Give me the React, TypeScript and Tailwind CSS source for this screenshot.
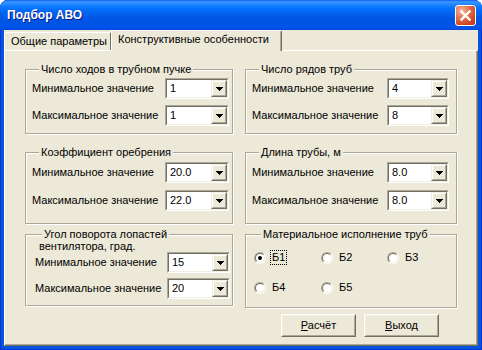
import React from "react";

const Arrow = () => (
  <svg width="7" height="4" shapeRendering="crispEdges">
    <path d="M0 0h7v1H0zM1 1h5v1H1zM2 2h3v1H2zM3 3h1v1H3z" fill="#000" />
  </svg>
);

const Combo = ({ value, w = "w-[64px]" }: { value: string; w?: string }) => (
  <div className={`${w} h-[21px] border border-t-[#aca899] border-l-[#aca899] border-r-white border-b-white`}>
    <div className="flex h-full items-center border border-t-[#716f64] border-l-[#716f64] border-r-[#f1efe2] border-b-[#f1efe2] bg-white">
      <span className="flex-1 pl-[3px]">{value}</span>
      <div className="h-full w-[16px] border border-t-[#f1efe2] border-l-[#f1efe2] border-r-[#716f64] border-b-[#716f64]">
        <div className="flex h-full w-full items-center justify-center border border-t-white border-l-white border-r-[#aca899] border-b-[#aca899] bg-[#ece9d8]">
          <Arrow />
        </div>
      </div>
    </div>
  </div>
);

const Row = ({ label, value, w }: { label: string; value: string; w?: string }) => (
  <div className="flex h-[21px] items-center justify-between">
    <span>{label}</span>
    <Combo value={value} w={w} />
  </div>
);

const Group = ({
  title,
  className,
  children,
}: {
  title: string;
  className: string;
  children: React.ReactNode;
}) => (
  <fieldset
    className={`border border-[#aca899] shadow-[inset_1px_1px_0_#fff,1px_1px_0_#fff] ${className}`}
  >
    <legend className="ml-[7px] bg-[#ece9d8] px-[2px] leading-[13px]">{title}</legend>
    {children}
  </fieldset>
);

const Radio = ({ checked }: { checked?: boolean }) => (
  <div className="h-[12px] w-[12px] rounded-full border border-t-[#aca899] border-l-[#aca899] border-r-white border-b-white">
    <div className="flex h-full w-full items-center justify-center rounded-full border border-t-[#716f64] border-l-[#716f64] border-r-[#f1efe2] border-b-[#f1efe2] bg-white">
      {checked && <div className="h-[4px] w-[4px] rounded-full bg-black" />}
    </div>
  </div>
);

const Option = ({ label, checked }: { label: string; checked?: boolean }) => (
  <div className="flex h-[17px] items-center">
    <Radio checked={checked} />
    <span
      className={`ml-[4px] border px-[1px] leading-[13px] ${
        checked ? "border-dotted border-black" : "border-transparent"
      }`}
    >
      {label}
    </span>
  </div>
);

const Button = ({ first, rest }: { first: string; rest: string }) => (
  <div className="h-[23px] w-[75px] border border-t-white border-l-white border-r-[#716f64] border-b-[#716f64]">
    <div className="flex h-full w-full items-center justify-center border border-t-[#f1efe2] border-l-[#f1efe2] border-r-[#aca899] border-b-[#aca899]">
      <span>
        <span className="underline">{first}</span>
        {rest}
      </span>
    </div>
  </div>
);

export default function App() {
  return (
    <div className="flex h-[350px] w-[482px] flex-col overflow-hidden rounded-t-[8px] bg-[#0855dd] font-['Liberation_Sans',Arial,sans-serif] text-[11px] leading-[13px] text-black shadow-[inset_0_0_0_1px_#0831d9]">
      {/* title bar */}
      <div className="flex h-[30px] items-center justify-between bg-[linear-gradient(to_bottom,#0a5fee_0%,#3d95ff_6%,#2a8cff_12%,#127dff_20%,#036ffc_30%,#0262ee_45%,#0057e5_60%,#0054e3_78%,#0055eb_90%,#0048dc_100%)] pl-[7px] pr-[6px]">
        <span className="pt-[1px] text-[12px] font-bold text-white [text-shadow:1px_1px_#0f1b89]">
          Подбор АВО
        </span>
        <div className="flex h-[21px] w-[21px] items-center justify-center rounded-[3px] border border-white bg-[radial-gradient(circle_at_30%_25%,#f4b79f_0%,#e3704c_40%,#cc4521_75%,#b8341a_100%)]">
          <svg width="19" height="19" viewBox="0 0 19 19">
            <path d="M5.5 5.5l8 8M13.5 5.5l-8 8" stroke="#fff" strokeWidth="2.4" strokeLinecap="square" />
          </svg>
        </div>
      </div>

      {/* client area */}
      <div className="mx-[4px] mb-[4px] flex flex-1 flex-col bg-[#ece9d8]">
        <div className="flex h-[20px] items-end">
          <div className="h-[18px] w-[107px] rounded-tl-[2px] border-t border-l border-r border-t-white border-l-white border-r-[#716f64] pl-[6px] pt-[2px]">
            Общие параметры
          </div>
          <div className="relative z-10 -mb-[1px] h-[21px] w-[171px] rounded-t-[2px] border-t border-l border-r border-t-white border-l-white border-r-[#716f64] bg-[#ece9d8] pl-[6px] pt-[2px] shadow-[inset_-1px_0_0_#aca899]">
            Конструктивные особенности
          </div>
        </div>

        <div className="flex flex-1 flex-col border border-t-white border-l-white border-r-[#716f64] border-b-[#716f64] pl-[20px] pt-[12px] shadow-[inset_-1px_-1px_0_#aca899]">
          <div className="grid grid-cols-[208px_212px] items-start gap-x-[12px]">
            <Group title="Число ходов в трубном пучке" className="h-[71px] pl-[6px] pr-[3px] pt-[2px]">
              <Row label="Минимальное значение" value="1" />
              <div className="h-[6px]" />
              <Row label="Максимальное значение" value="1" />
            </Group>
            <Group title="Число рядов труб" className="h-[71px] pl-[6px] pr-[7px] pt-[2px]">
              <Row label="Минимальное значение" value="4" w="w-[62px]" />
              <div className="h-[6px]" />
              <Row label="Максимальное значение" value="8" w="w-[62px]" />
            </Group>

            <Group title="Коэффициент оребрения" className="mt-[12px] h-[78px] pl-[6px] pr-[3px] pt-[3px]">
              <Row label="Минимальное значение" value="20.0" />
              <div className="h-[7px]" />
              <Row label="Максимальное значение" value="22.0" />
            </Group>
            <Group title="Длина трубы, м" className="mt-[12px] h-[78px] pl-[6px] pr-[7px] pt-[3px]">
              <Row label="Минимальное значение" value="8.0" w="w-[62px]" />
              <div className="h-[7px]" />
              <Row label="Максимальное значение" value="8.0" w="w-[62px]" />
            </Group>

            <Group title="Угол поворота лопастей" className="mt-[4px] h-[78px] pl-[9px] pr-[2px]">
              <div className="-ml-[6px] pl-[10px] leading-[11px]">вентилятора, град.</div>
              <Row label="Минимальное значение" value="15" w="w-[63px]" />
              <div className="h-[5px]" />
              <Row label="Максимальное значение" value="20" w="w-[63px]" />
            </Group>
            <Group title="Материальное исполнение труб" className="mt-[4px] h-[80px] pl-[8px] pt-[8px]">
              <div className="grid grid-cols-[67px_66px_auto] gap-y-[13px]">
                <Option label="Б1" checked />
                <Option label="Б2" />
                <Option label="Б3" />
                <Option label="Б4" />
                <Option label="Б5" />
              </div>
            </Group>
          </div>

          <div className="mt-[6px] flex gap-[8px] pl-[256px]">
            <Button first="Р" rest="асчёт" />
            <Button first="В" rest="ыход" />
          </div>
        </div>
      </div>
    </div>
  );
}
